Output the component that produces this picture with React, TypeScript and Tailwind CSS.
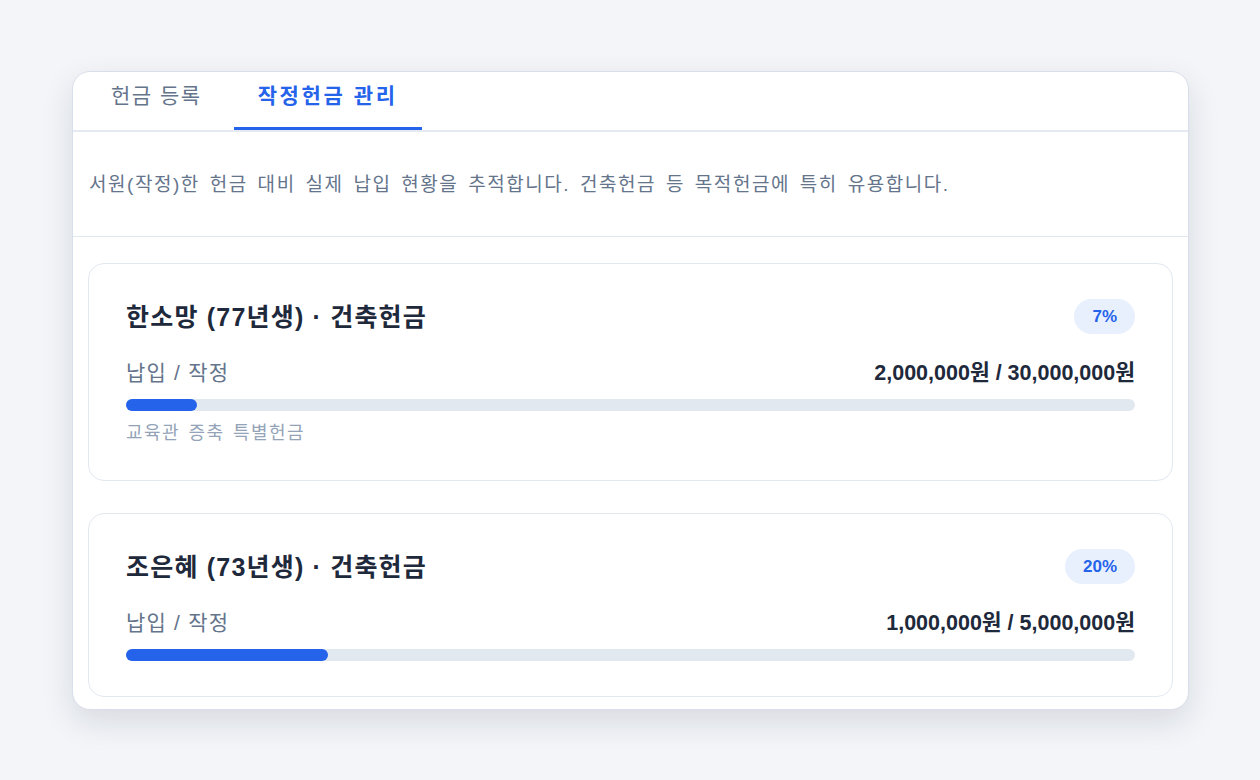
import React from "react";

const items = [
  {
    name: "한소망 (77년생) · 건축헌금",
    pct: 7,
    paid: "2,000,000원",
    pledged: "30,000,000원",
    note: "교육관 증축 특별헌금",
  },
  {
    name: "조은혜 (73년생) · 건축헌금",
    pct: 20,
    paid: "1,000,000원",
    pledged: "5,000,000원",
    note: "",
  },
];

export default function App() {
  return (
    <div
      className="min-h-screen w-full bg-[#f3f5f9] pt-[71px] pl-[72px]"
      style={{ fontFamily: '"Liberation Sans", "Noto Sans CJK KR", sans-serif' }}
    >
      <div className="w-[1117px] overflow-hidden rounded-[18px] border border-[#d9dfea] bg-white shadow-[0_12px_32px_rgba(15,23,42,0.12)]">
        <div className="flex gap-[7px] border-b-2 border-[#e4e9f2] px-[14px]">
          <button className="border-b-[3px] border-transparent px-6 pt-[10px] pb-[17px] text-[21px] leading-[28px] tracking-[1.5px] text-[#64748b]">
            헌금 등록
          </button>
          <button className="ml-[1px] border-b-[3px] border-[#2563eb] px-[24px] pt-[10px] pb-[17px] text-[21px] font-bold leading-[28px] tracking-[2.6px] text-[#2563eb]">
            작정헌금 관리
          </button>
        </div>
        <div className="border-b border-[#e2e8f0] px-[16px] pt-[41px] pb-[39px] text-[19px] leading-[24px] tracking-[1.55px] text-[#64748b] [word-spacing:3px]">
          서원(작정)한 헌금 대비 실제 납입 현황을 추적합니다. 건축헌금 등 목적헌금에 특히 유용합니다.
        </div>
        <div className="flex flex-col gap-8 px-[15px] pt-[26px] pb-[12px]">
          {items.map((it) => (
            <div
              key={it.name}
              className="rounded-[16px] border border-[#e2e8f0] bg-white px-[37px] pt-[35px] pb-[35px]"
            >
              <div className="flex items-center justify-between">
                <div className="text-[25px] font-bold leading-[32px] tracking-[1.2px] text-[#1e293b]">
                  {it.name}
                </div>
                <div className="rounded-full bg-[#e8f0fe] px-[18px] text-[17px] font-bold leading-[35px] text-[#2563eb]">
                  {it.pct}%
                </div>
              </div>
              <div className="mt-[25px] flex items-center justify-between leading-[28px]">
                <span className="text-[21px] tracking-[1.2px] text-[#64748b]">납입 / 작정</span>
                <span className="text-[21.5px] font-bold text-[#1e293b]">
                  {it.paid} / {it.pledged}
                </span>
              </div>
              <div className="mt-[12px] h-[12px] w-full rounded-full bg-[#e2e8f0]">
                <div className="h-full rounded-full bg-[#2563eb]" style={{ width: `${it.pct}%` }} />
              </div>
              {it.note && (
                <div className="mt-[10px] text-[18px] leading-[24px] tracking-[1.44px] text-[#94a3b8] [word-spacing:2px]">
                  {it.note}
                </div>
              )}
            </div>
          ))}
        </div>
      </div>
    </div>
  );
}
